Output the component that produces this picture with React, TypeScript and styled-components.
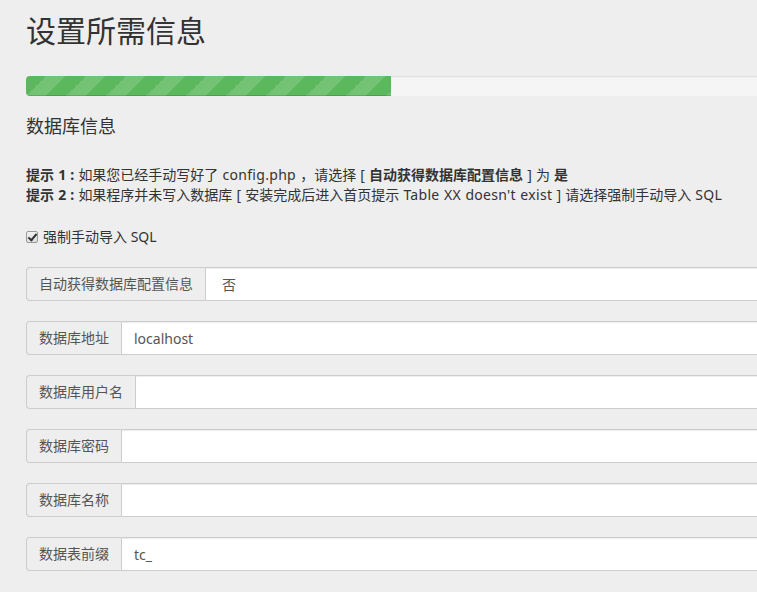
import React from "react";
import styled, { createGlobalStyle } from "styled-components";

const Global = createGlobalStyle`
  html, body { margin: 0; padding: 0; background: #eeeeee; overflow: hidden; }
  body {
    font-family: "Noto Sans", "Noto Sans CJK SC", sans-serif;
    font-size: 14px;
    line-height: 20px;
    color: #333;
  }
  * { box-sizing: border-box; }
`;

const Page = styled.div`
  width: 1000px;
  padding: 11px 0 0 26px;
`;

const Title = styled.h1`
  margin: 0 0 29px;
  font-size: 30px;
  line-height: 36px;
  font-weight: 400;
  color: #333;
  font-family: "Noto Sans CJK SC", sans-serif;
`;

const Progress = styled.div`
  height: 20px;
  background: #f5f5f5;
  border-radius: 4px;
  box-shadow: inset 0 1px 2px rgba(0, 0, 0, 0.1);
  overflow: hidden;
  margin-bottom: 18px;
`;

const Bar = styled.div`
  height: 100%;
  background-color: #5cb85c;
  background-image: linear-gradient(
    -45deg,
    rgba(255, 255, 255, 0.15) 25%,
    transparent 25%,
    transparent 50%,
    rgba(255, 255, 255, 0.15) 50%,
    rgba(255, 255, 255, 0.15) 75%,
    transparent 75%,
    transparent
  );
  background-size: 40px 40px;
  box-shadow: inset 0 -1px 0 rgba(0, 0, 0, 0.15);
`;

const Section = styled.h3`
  margin: 0 0 29px;
  font-size: 18px;
  line-height: 22px;
  font-weight: 400;
  font-family: "Noto Sans CJK SC", sans-serif;
`;

const Tips = styled.div`
  margin-bottom: 22px;
  font-size: 14px;
  line-height: 20px;
  color: #333;
  white-space: nowrap;
  word-spacing: 0.5px;
`;

const Latin = styled.span`
  letter-spacing: 0.3px;
`;

const Bold = styled.b`
  font-weight: 700;
`;

const CheckRow = styled.label`
  display: flex;
  align-items: center;
  gap: 5px;
  margin-bottom: 20px;
  line-height: 20px;
`;

const Check = styled.input`
  appearance: none;
  position: relative;
  margin: 0;
  width: 12px;
  height: 12px;
  border: 1px solid #9a9a9a;
  border-radius: 2px;
  background: linear-gradient(#f2f2f2, #dcdcdc);
  &:checked::after {
    content: "";
    position: absolute;
    left: 3px;
    top: 0px;
    width: 3px;
    height: 7px;
    border: solid #333;
    border-width: 0 2px 2px 0;
    transform: rotate(40deg);
  }
`;

const Group = styled.div`
  display: flex;
  height: 34px;
  margin-bottom: 20px;
`;

const Addon = styled.span`
  display: flex;
  align-items: center;
  padding: 6px 12px;
  background: #eeeeee;
  border: 1px solid #ccc;
  border-right: none;
  border-radius: 4px 0 0 4px;
  color: #555;
  font-size: 14px;
  white-space: nowrap;
`;

const Field = styled.input<{ $pad?: number }>`
  flex: 1;
  height: 34px;
  padding: 6px ${(p) => p.$pad ?? 12}px;
  border: 1px solid #ccc;
  border-radius: 0 4px 4px 0;
  background: #fff;
  color: #555;
  font-family: inherit;
  font-size: 14px;
  box-shadow: inset 0 1px 1px rgba(0, 0, 0, 0.075);
  outline: none;
`;

const fields: { label: string; value: string; pad?: number }[] = [
  { label: "自动获得数据库配置信息", value: "否", pad: 16 },
  { label: "数据库地址", value: "localhost" },
  { label: "数据库用户名", value: "" },
  { label: "数据库密码", value: "" },
  { label: "数据库名称", value: "" },
  { label: "数据表前缀", value: "tc_" },
];

export default function App() {
  return (
    <>
      <Global />
      <Page>
        <Title>设置所需信息</Title>
        <Progress>
          <Bar style={{ width: "365px" }} />
        </Progress>
        <Section>数据库信息</Section>
        <Tips>
          <div>
            <Bold>提示 1 : </Bold>如果您已经手动写好了 <Latin>config.php</Latin> ，请选择 [ <Bold>自动获得数据库配置信息</Bold> ] 为 <Bold>是</Bold>
          </div>
          <div>
            <Bold>提示 2 : </Bold>如果程序并未写入数据库 [ 安装完成后进入首页提示 <Latin>Table XX doesn't exist</Latin> ] 请选择强制手动导入 <Latin>SQL</Latin>
          </div>
        </Tips>
        <CheckRow>
          <Check type="checkbox" defaultChecked />
          强制手动导入 SQL
        </CheckRow>
        {fields.map((f) => (
          <Group key={f.label}>
            <Addon>{f.label}</Addon>
            <Field $pad={f.pad} defaultValue={f.value} readOnly />
          </Group>
        ))}
      </Page>
    </>
  );
}
